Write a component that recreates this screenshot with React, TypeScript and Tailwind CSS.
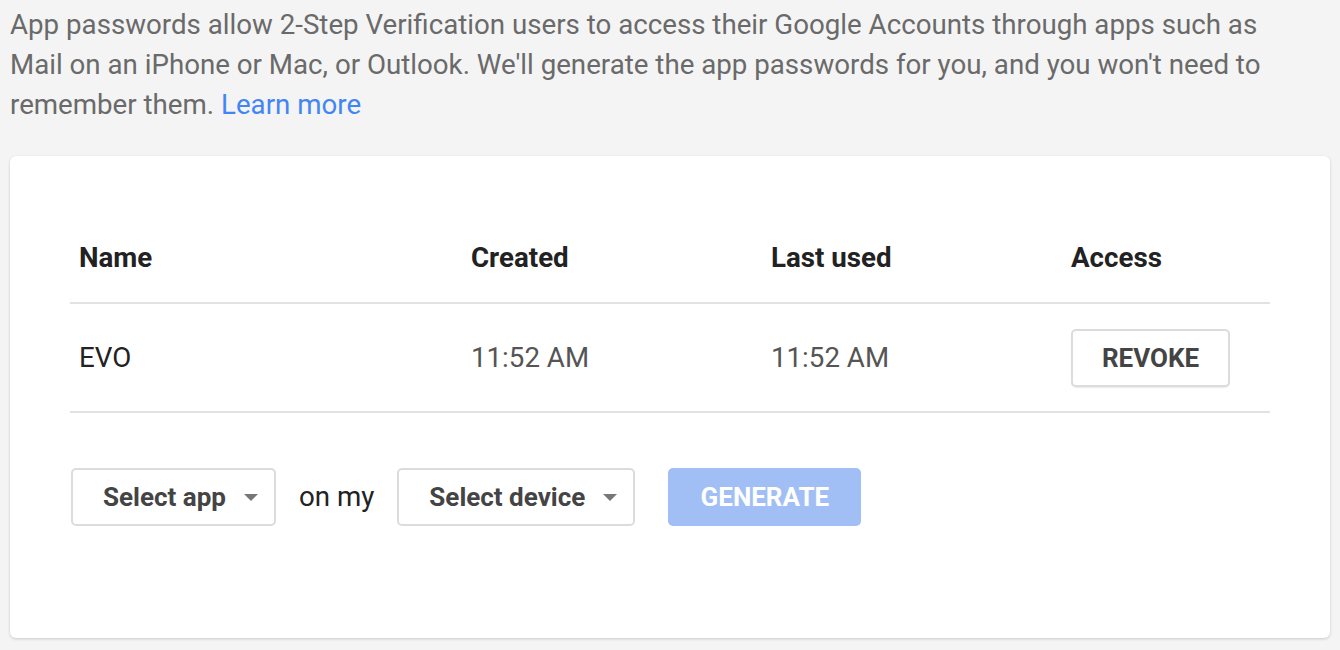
export default function App() {
  return (
    <div className="h-[650px] overflow-hidden bg-[#f4f4f4] px-[10px] font-['Roboto',sans-serif]">
      <p className="pr-[40px] pt-[5px] text-[27.7px] leading-[40px] text-[#6a6a6a]">
        App passwords allow 2-Step Verification users to access their Google Accounts through apps such as Mail on an
        iPhone or Mac, or Outlook. We'll generate the app passwords for you, and you won't need to remember them.{" "}
        <a className="text-[#4285f4]">Learn more</a>
      </p>

      <div className="mt-[31px] rounded-[6px] bg-white px-[60px] pb-[112px] pt-[58px] shadow-[0_1px_3px_rgba(0,0,0,0.18)]">
        {/* table */}
        <div className="grid h-[90px] grid-cols-[392px_300px_300px_1fr] items-center border-b-2 border-[#e2e2e2] text-[27.7px] font-bold text-[#222]">
          <div className="pl-[9px]">Name</div>
          <div className="pl-[9px]">Created</div>
          <div className="pl-[9px]">Last used</div>
          <div className="pl-[9px]">Access</div>
        </div>
        <div className="grid h-[109px] grid-cols-[392px_300px_300px_1fr] items-center border-b-2 border-[#e2e2e2] text-[27.7px]">
          <div className="pl-[9px] text-[#222]">EVO</div>
          <div className="pl-[9px] text-[#555]">11:52 AM</div>
          <div className="pl-[9px] text-[#555]">11:52 AM</div>
          <div className="pl-[9px]">
            <button className="h-[58px] w-[159px] rounded-[5px] border-2 border-[#dcdcdc] bg-white pt-px text-[26px] font-bold text-[#444] shadow-[0_1px_1px_rgba(0,0,0,0.08)]">
              REVOKE
            </button>
          </div>
        </div>

        {/* generate row */}
        <div className="mt-[55px] flex items-center pl-px">
          <button className="flex h-[58px] w-[205px] items-center rounded-[5px] border-2 border-[#dcdcdc] bg-white pl-[30px] text-[26px] font-bold text-[#444]">
            Select app
            <span className="ml-[18px] h-0 w-0 border-x-[7.5px] border-t-[7px] border-x-transparent border-t-[#777]" />
          </button>
          <span className="mx-[23px] text-[27.7px] text-[#222]">on my</span>
          <button className="flex h-[58px] w-[238px] items-center rounded-[5px] border-2 border-[#dcdcdc] bg-white pl-[30px] text-[26px] font-bold text-[#444]">
            Select device
            <span className="ml-[18px] h-0 w-0 border-x-[7.5px] border-t-[7px] border-x-transparent border-t-[#777]" />
          </button>
          <button className="ml-[33px] h-[58px] w-[193px] rounded-[5px] bg-[#a1bff5] text-[26px] font-bold text-white">
            GENERATE
          </button>
        </div>
      </div>
    </div>
  );
}
